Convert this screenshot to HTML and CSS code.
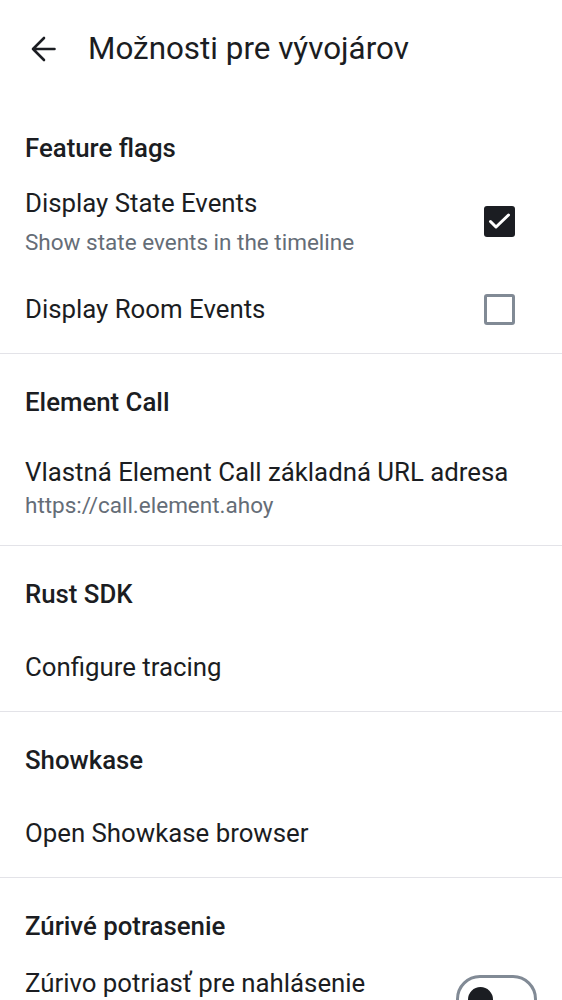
FILE: index.html
```html
<!DOCTYPE html>
<html lang="sk">
<head>
<meta charset="utf-8">
<title>Možnosti pre vývojárov</title>
<link rel="stylesheet" href="styles.css">
</head>
<body>
<div class="screen">
  <header class="appbar">
    <svg class="back" width="28" height="28" viewBox="0 0 28 28" aria-hidden="true">
      <path d="M24.5 14H3M14 3L3 14L14 25" fill="none" stroke="#1b1d22" stroke-width="2.6" stroke-linecap="round" stroke-linejoin="round"/>
    </svg>
    <h1 class="title">Možnosti pre vývojárov</h1>
  </header>

  <section class="section">
    <h2 class="cat">Feature flags</h2>
    <div class="item check-item">
      <div class="texts">
        <div class="label">Display State Events</div>
        <div class="sub sub-wide">Show state events in the timeline</div>
      </div>
      <span class="checkbox checked">
        <svg width="31" height="31" viewBox="0 0 31 31" aria-hidden="true"><path d="M6.5 15.5L12 21L24.5 9" fill="none" stroke="#fff" stroke-width="3" stroke-linecap="round" stroke-linejoin="round"/></svg>
      </span>
    </div>
    <div class="item single">
      <div class="texts"><div class="label">Display Room Events</div></div>
      <span class="checkbox"></span>
    </div>
  </section>

  <section class="section">
    <h2 class="cat">Element Call</h2>
    <div class="item two-line">
      <div class="texts">
        <div class="label">Vlastná Element Call základná URL adresa</div>
        <div class="sub">https://call.element.ahoy</div>
      </div>
    </div>
  </section>

  <section class="section">
    <h2 class="cat">Rust SDK</h2>
    <div class="item single">
      <div class="texts"><div class="label">Configure tracing</div></div>
    </div>
  </section>

  <section class="section">
    <h2 class="cat">Showkase</h2>
    <div class="item single">
      <div class="texts"><div class="label">Open Showkase browser</div></div>
    </div>
  </section>

  <section class="section last">
    <h2 class="cat">Zúrivé potrasenie</h2>
    <div class="item check-item switch-item">
      <div class="texts"><div class="label">Zúrivo potriasť pre nahlásenie</div></div>
      <span class="switch"><span class="knob"></span></span>
    </div>
  </section>
</div>
</body>
</html>
```
FILE: styles.css
```css
html, body {
  margin: 0;
  padding: 0;
  background: #ffffff;
}
body {
  font-family: Roboto, "Noto Sans", "Liberation Sans", sans-serif;
  color: #1b1d22;
  overflow: hidden;
}
.screen {
  width: 562px;
  height: 1000px;
  overflow: hidden;
}
.appbar {
  height: 100px;
  display: flex;
  align-items: center;
  padding-left: 30px;
  box-sizing: border-box;
}
.back {
  flex: none;
  margin-top: -2px;
}
.title {
  margin: 0 0 0 30px;
  font-size: 31.4px;
  font-weight: 400;
  line-height: 36px;
  margin-top: -2px;
}
.section {
  border-bottom: 1px solid #e3e3e8;
  padding-bottom: 6px;
}
.section.last {
  border-bottom: none;
}
.cat {
  margin: 0;
  padding: 33px 25px 0;
  font-size: 25.8px;
  font-weight: 500;
  line-height: 30px;
}
.item {
  display: flex;
  align-items: center;
  padding: 0 25px;
}
.item.single {
  margin-top: 20px;
  min-height: 76px;
}
.item.two-line {
  margin-top: 20px;
  padding-top: 19px;
  padding-bottom: 20px;
}
.item.check-item {
  margin-top: 20px;
  padding-top: 4px;
  padding-bottom: 15px;
}
.item.single + .item.single,
.item.check-item + .item.single {
  margin-top: 0;
}
.texts {
  flex: 1;
  min-width: 0;
}
.label {
  font-size: 25.8px;
  line-height: 32px;
  font-weight: 400;
  white-space: nowrap;
}
.sub {
  font-size: 22.5px;
  line-height: 28px;
  color: #656d77;
  margin-top: 3px;
  white-space: nowrap;
}
.sub.sub-wide {
  margin-top: 9px;
}
.checkbox {
  flex: none;
  width: 31px;
  height: 31px;
  box-sizing: border-box;
  border: 3px solid #818a95;
  border-radius: 3px;
  margin-right: 22px;
  display: block;
}
.checkbox.checked {
  border: none;
  background: #1b1d22;
}
.checkbox svg {
  display: block;
}
.item.switch-item {
  align-items: flex-start;
  padding-top: 6px;
}
.switch {
  flex: none;
  align-self: flex-start;
  margin-top: 8px;
  margin-right: 0;
  width: 81px;
  height: 48px;
  box-sizing: border-box;
  border: 3px solid #818a95;
  border-radius: 24px;
  display: flex;
  align-items: center;
  padding-left: 9px;
}
.knob {
  width: 25px;
  height: 25px;
  border-radius: 50%;
  background: #1b1d22;
}
```
